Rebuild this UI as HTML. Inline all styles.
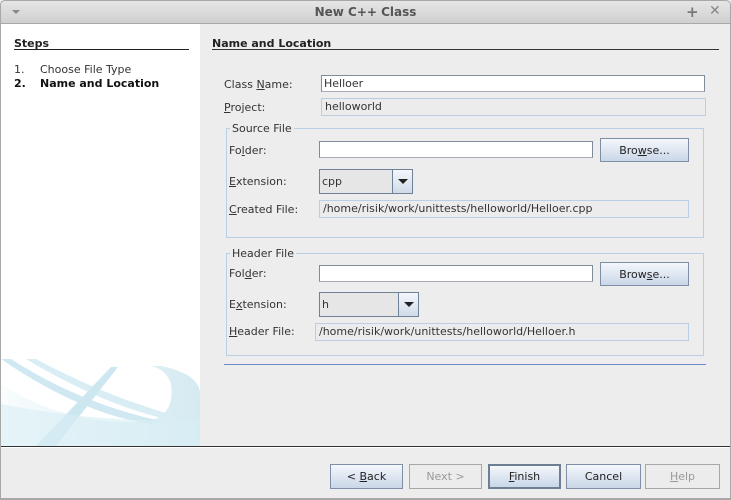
<!DOCTYPE html>
<html><head><style>
*{margin:0;padding:0;box-sizing:border-box}
body{width:731px;height:500px;background:#ededed;font-family:"DejaVu Sans","Liberation Sans",sans-serif;font-size:11px;color:#333;position:relative;overflow:hidden}
.a{position:absolute;white-space:nowrap}
.lbl{line-height:13px}
.in{position:absolute;background:#fff;border:1px solid #7f8c99;border-bottom-color:#aab;}
.ro{position:absolute;background:#ececec;border:1px solid #b8cfe5;padding-left:3px;line-height:16px}
.btn{position:absolute;border:1px solid #7d8ea5;background:linear-gradient(#f4f7fb,#c9d7e8);text-align:center;line-height:23px;font-size:11px;color:#222}
.dis{border-color:#a8a8a8;background:#ececec;color:#999}
.fs{position:absolute;border:1px solid #b8cfe5}
.lg{position:absolute;background:#ededed;padding:0 2px;line-height:13px}
u{text-decoration:underline}
.combo{position:absolute;border:1px solid #6f8196;background:#e6e6e6}
.combo .t{position:absolute;left:2px;top:0;line-height:23px}
.combo .ar{position:absolute;right:0;top:0;bottom:0;width:20px;border-left:1px solid #6f8196;background:linear-gradient(#f4f7fb,#cfdbea)}
.combo .ar:after{content:"";position:absolute;left:5px;top:9px;border-left:5px solid transparent;border-right:5px solid transparent;border-top:5px solid #222}
</style></head><body>
<div class="a" style="left:0;top:0;width:731px;height:24px;background:linear-gradient(#e6e6e6,#cfcfcf);border:1px solid #a8a8a8;border-radius:5px 5px 0 0"></div>
<div class="a" style="left:12px;top:10px;border-left:4px solid transparent;border-right:4px solid transparent;border-top:4px solid #888"></div>
<div class="a" style="left:0;width:731px;top:5px;text-align:center;font-weight:bold;font-size:12px;color:#555">New C++ Class</div>
<div class="a" style="left:686px;top:3px;font-size:15px;font-weight:bold;color:#777">+</div>
<div class="a" style="left:709px;top:3px;font-size:14px;font-weight:bold;color:#888">✕</div>
<div class="a" style="left:0;top:24px;width:1px;height:476px;background:#a8a8a8"></div>
<div class="a" style="right:0;top:24px;width:1px;height:476px;background:#a8a8a8"></div>
<div class="a" style="left:0;top:498px;width:731px;height:2px;background:#a8a8a8"></div>
<div class="a" style="left:1px;top:24px;width:199px;height:422px;background:#fff;overflow:hidden">
<svg width="199" height="422" style="position:absolute;left:0;top:0">
<defs><linearGradient id="g" x1="0" x2="1"><stop offset="0" stop-color="#f4fafc"/><stop offset="1" stop-color="#b8dce8"/></linearGradient></defs>
<path d="M0 360 Q60 400 140 398 Q175 395 170 360 Q165 345 150 342 L160 342 Q199 350 199 370 L199 422 L0 422Z" fill="url(#g)" opacity=".6"/>
<path d="M0 335 Q80 390 150 400 L160 397 Q80 380 10 335Z" fill="#cfe8f1"/>
<path d="M25 335 Q100 380 165 395 L168 390 Q100 370 35 335Z" fill="#d8edf4"/>
<path d="M110 343 L117 343 L55 422 L35 422Z" fill="#cde7f1"/>
<path d="M0 380 Q100 400 199 395 L199 422 L0 422Z" fill="#d9eef5" opacity=".6"/>
</svg></div>
<div class="a" style="left:14px;top:37px;font-weight:bold;color:#222">Steps</div>
<div class="a" style="left:14px;top:49px;width:175px;height:1px;background:#222"></div>
<div class="a" style="left:14px;top:63px;color:#333">1.</div>
<div class="a" style="left:40px;top:63px;color:#333">Choose File Type</div>
<div class="a" style="left:14px;top:77px;font-weight:bold;color:#111">2.</div>
<div class="a" style="left:40px;top:77px;font-weight:bold;color:#111">Name and Location</div>
<div class="a" style="left:212px;top:37px;font-weight:bold;color:#222">Name and Location</div>
<div class="a" style="left:212px;top:49px;width:507px;height:1px;background:#333"></div>

<div class="a lbl" style="left:224px;top:78px">Class <u>N</u>ame:</div>
<div class="in" style="left:321px;top:75px;width:384px;height:17px;padding-left:2px;line-height:15px">Helloer</div>
<div class="a lbl" style="left:224px;top:101px"><u>P</u>roject:</div>
<div class="ro" style="left:321px;top:98px;width:385px;height:18px">helloworld</div>

<div class="fs" style="left:226px;top:128px;width:478px;height:110px"></div>
<div class="lg" style="left:230px;top:122px">Source File</div>
<div class="a lbl" style="left:229px;top:144px">Fo<u>l</u>der:</div>
<div class="in" style="left:319px;top:141px;width:274px;height:17px"></div>
<div class="btn" style="left:600px;top:138px;width:89px;height:24px">Bro<u>w</u>se...</div>
<div class="a lbl" style="left:229px;top:175px"><u>E</u>xtension:</div>
<div class="combo" style="left:319px;top:169px;width:94px;height:25px"><span class="t">cpp</span><div class="ar"></div></div>
<div class="a lbl" style="left:229px;top:203px"><u>C</u>reated File:</div>
<div class="ro" style="left:319px;top:200px;width:370px;height:18px">/home/risik/work/unittests/helloworld/Helloer.cpp</div>

<div class="fs" style="left:226px;top:253px;width:478px;height:103px"></div>
<div class="lg" style="left:230px;top:247px">Header File</div>
<div class="a lbl" style="left:229px;top:267px">Fol<u>d</u>er:</div>
<div class="in" style="left:319px;top:265px;width:274px;height:17px"></div>
<div class="btn" style="left:600px;top:262px;width:89px;height:24px">Brow<u>s</u>e...</div>
<div class="a lbl" style="left:229px;top:298px">E<u>x</u>tension:</div>
<div class="combo" style="left:319px;top:292px;width:100px;height:25px"><span class="t">h</span><div class="ar"></div></div>
<div class="a lbl" style="left:229px;top:325px"><u>H</u>eader File:</div>
<div class="ro" style="left:315px;top:323px;width:374px;height:18px">/home/risik/work/unittests/helloworld/Helloer.h</div>

<div class="a" style="left:224px;top:364px;width:482px;height:1px;background:#6b8ccc"></div>
<div class="a" style="left:1px;top:446px;width:729px;height:1px;background:#333"></div>
<div class="a" style="left:1px;top:447px;width:729px;height:1px;background:#fff"></div>

<div class="btn" style="left:330px;top:464px;width:73px;height:25px">&lt; <u>B</u>ack</div>
<div class="btn dis" style="left:409px;top:464px;width:73px;height:25px">Next &gt;</div>
<div class="btn" style="left:488px;top:464px;width:73px;height:25px;border:2px solid #6f7f93;line-height:21px"><u>F</u>inish</div>
<div class="btn" style="left:566px;top:464px;width:75px;height:25px">Cancel</div>
<div class="btn dis" style="left:645px;top:464px;width:75px;height:25px"><u>H</u>elp</div>
</body></html>
